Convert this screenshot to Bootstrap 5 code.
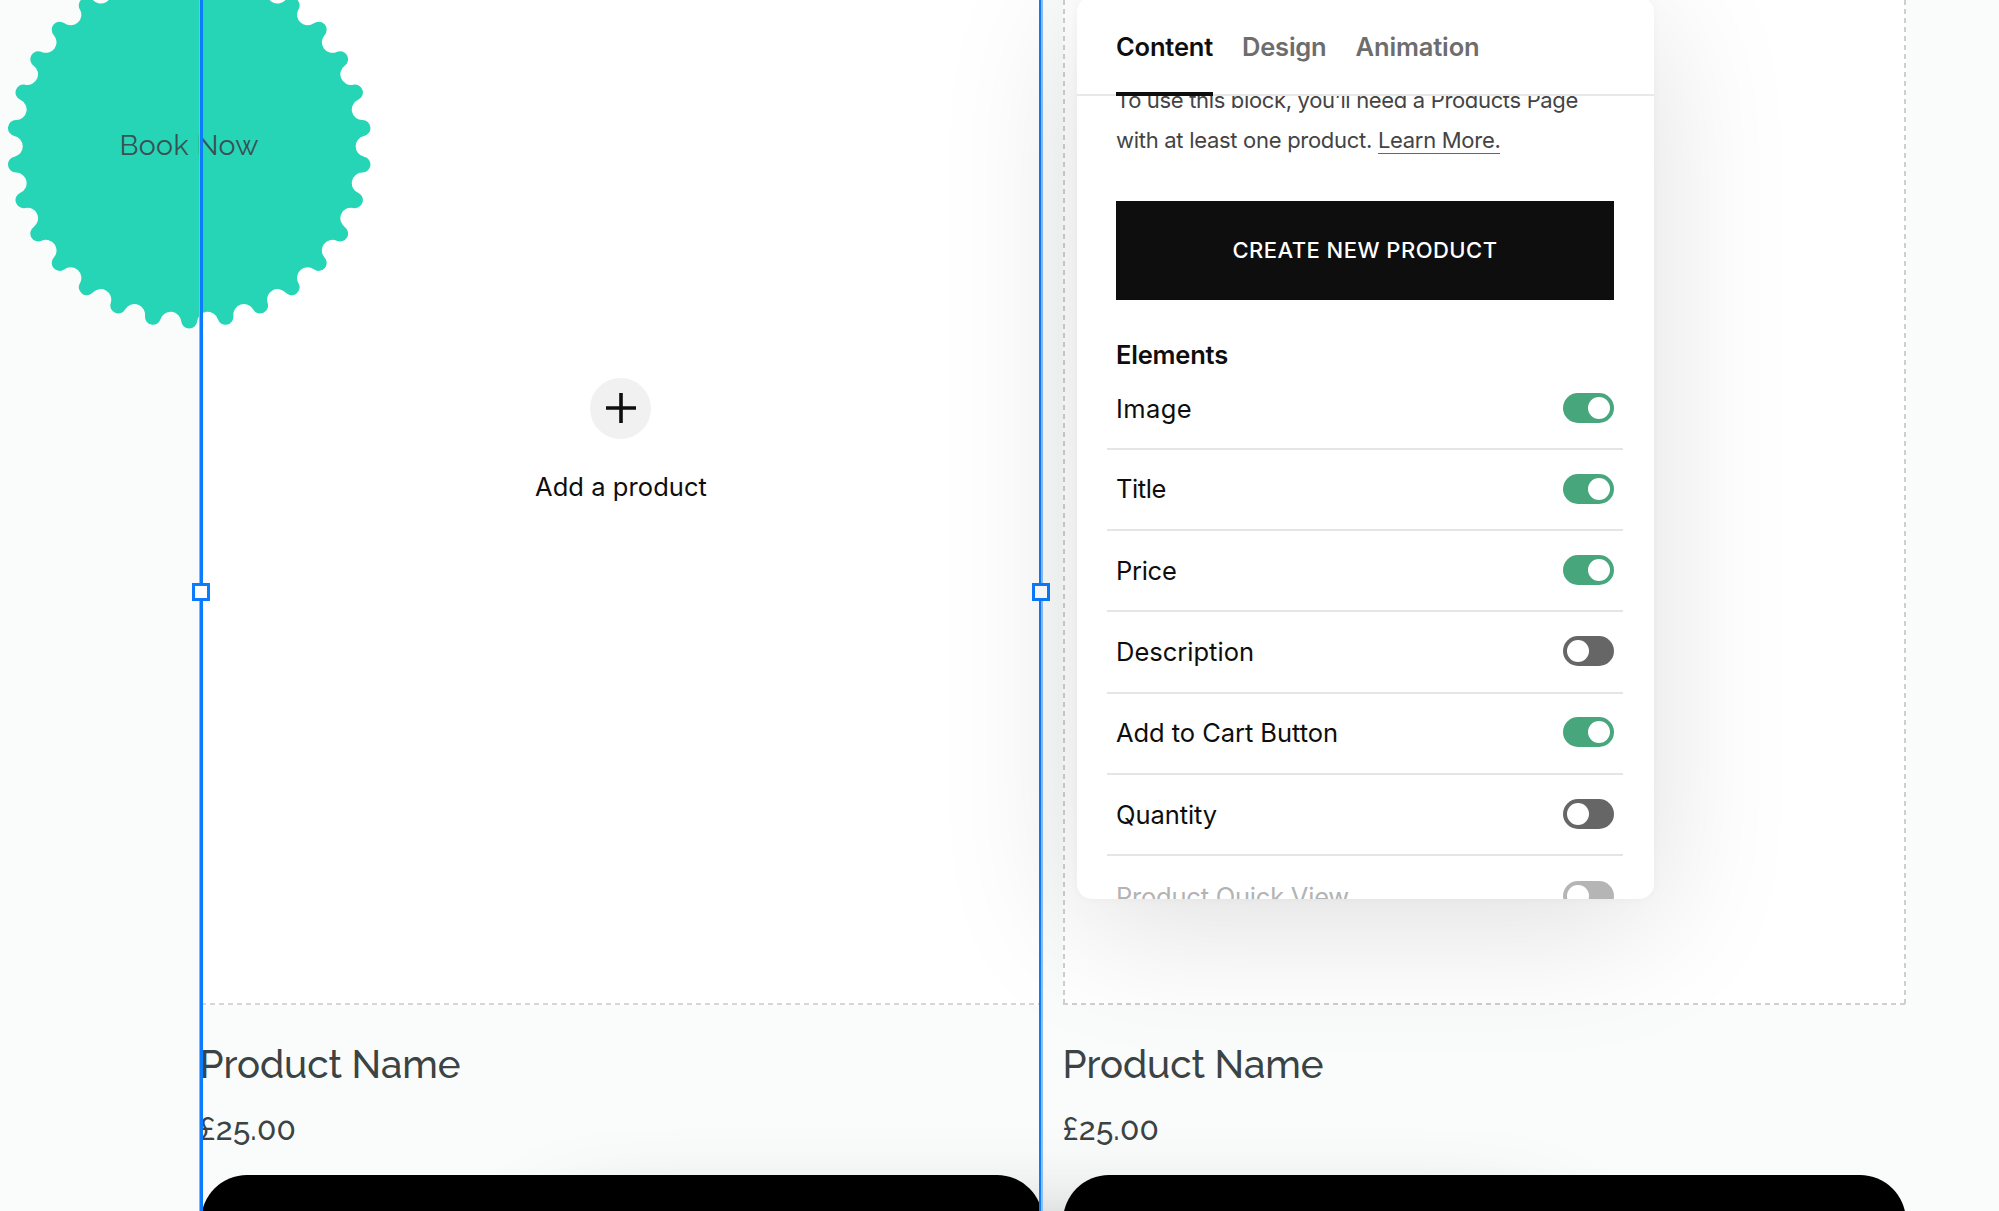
<!DOCTYPE html>
<html lang="en">
<head>
<meta charset="utf-8">
<meta name="viewport" content="width=device-width, initial-scale=1">
<title>Product block editor</title>
<link rel="stylesheet" href="https://cdn.jsdelivr.net/npm/bootstrap@5.3.0/dist/css/bootstrap.min.css">
<style>
  body { background: #fafcfb; font-family: Inter, "Liberation Sans", sans-serif; color: #0e0e0e; height: 1211px; }
  .stage { height: 1211px; padding-left: 200.5px; padding-right: 93px; }
  .products { gap: 20px; }
  .slot { height: 1005px; background: #fff; position: relative; }
  .slot svg.dashes { position: absolute; inset: 0; width: 100%; height: 100%; }
  .product-name, .product-price, .seal text { font-family: Raleway, Lato, sans-serif; color: #3b4344; }
  .product-name { font-size: 38.5px; line-height: 46px; margin: 37px 0 0; font-weight: 500; white-space: nowrap; }
  .product-price { font-size: 31.5px; line-height: 38px; margin: 22px 0 0; font-weight: 500; white-space: nowrap; }
  .first .product-name, .first .product-price { margin-left: -1px; }
  .cta { height: 100px; margin-top: 26.5px; background: #000; border-radius: 46px; position: relative; z-index: 2; }
  .plus-disc { width: 61px; height: 61px; margin: 377.5px 1.5px 0 0; background: #f1f1f1; }
  .add-label { font-size: 25.5px; line-height: 30px; margin: 33.5px 1px 0 0; }
  .seal { position: absolute; left: 0; top: 0; z-index: 3; }
  .edge { position: absolute; top: 0; bottom: 0; width: 4px; z-index: 4; }
  .edge-start { left: 199px; background: linear-gradient(90deg, #8fb0f2 0 1.5px, #0c7cff 1.5px); }
  .edge-end { left: 1039px; background: linear-gradient(90deg, #0c7cff 0 2.5px, #8fbcfb 2.5px); }
  .handle { position: absolute; left: -7px; top: 583px; width: 18px; height: 18px; border: 3.5px solid #0c7cff; background: #fff; }
  .glow { position: absolute; z-index: 1; left: 570px; top: 1250px; width: 960px; height: 200px; box-shadow: 0 0 110px rgba(0,0,0,.42); }
  .editor { position: absolute; z-index: 5; left: 1077px; top: -3px; width: 577px; height: 902px; background: #fff; border-radius: 15px; box-shadow: 0 26px 140px rgba(0,0,0,.13), 0 0 10px rgba(0,0,0,.03); overflow: hidden; }
  .editor-tabs { height: 99px; padding-left: 39px; gap: 29px; border-bottom: 2px solid #e8e8e8; background: #fff; position: relative; z-index: 1; font-size: 25.5px; font-weight: 600; color: #6d6d6d; }
  .tab-item { height: 99px; line-height: 99px; padding: 0; white-space: nowrap; }
  .tab-item.active { color: #0e0e0e; border-bottom: 4px solid #0e0e0e; }
  .editor-body { padding: 0 40px 0 39px; }
  .hint { font-size: 22px; line-height: 40px; color: #444; margin: -16px 0 0; white-space: nowrap; }
  .hint a { color: inherit; text-decoration: none; border-bottom: 1.6px solid #666; }
  .create { margin-top: 40.5px; height: 99.5px; background: #0e0e0e; color: #fff; font-size: 22px; font-weight: 500; border-radius: 0; border: 0; padding-bottom: 6px; }
  .section-title { font-size: 25.5px; line-height: 30px; font-weight: 600; margin: 39.5px 0 0; }
  .options { margin: 0 -9px; }
  .option { height: 81.3px; padding: 0 9px; border-bottom: 2px solid #e5e5e5; font-size: 25.5px; }
  .option:first-child { height: 80.4px; }
  .option.dimmed { color: #b3b3b3; border: 0; }
  .option.dimmed .toggle { background: #b5b5b5; }
  .toggle { width: 51px; height: 30px; border-radius: 15px; background: #666; padding: 4px; margin-bottom: 2px; }
  .toggle i { width: 22px; height: 22px; border-radius: 50%; background: #fff; display: block; }
  .toggle.on { background: #47a67c; justify-content: flex-end; }
</style>
</head>
<body>
<main class="stage position-relative overflow-hidden">
  <div class="products d-flex">
    <section class="first" style="width:842px">
      <div class="slot d-flex flex-column align-items-center">
        <svg class="dashes"><path d="M0 1004H842" stroke="#d5d6d6" stroke-width="2" stroke-dasharray="5 4"/></svg>
        <div class="plus-disc rounded-circle d-flex align-items-center justify-content-center">
          <svg width="30" height="30" viewBox="0 0 30 30" stroke="#0e0e0e" stroke-width="3.6"><path d="M0 15H30M15 0V30"/></svg>
        </div>
        <div class="add-label"><span data-fit="172">Add a product</span></div>
      </div>
      <h2 class="product-name"><span data-fit="261">Product Name</span></h2>
      <p class="product-price"><span data-fit="96.5">£25.00</span></p>
      <div class="cta"></div>
    </section>
    <section style="width:843px">
      <div class="slot">
        <svg class="dashes"><path d="M0 1004H843M1 1004V0M842 1004V0" stroke="#cfcfcf" stroke-width="2" stroke-dasharray="5 4" fill="none"/></svg>
      </div>
      <h2 class="product-name"><span data-fit="261">Product Name</span></h2>
      <p class="product-price"><span data-fit="96.5">£25.00</span></p>
      <div class="cta"></div>
    </section>
  </div>

  <div class="glow"></div>

  <svg class="seal" width="380" height="340" viewBox="0 0 380 340">
    <path id="sealShape" fill="#26d5b5"/>
    <text x="119.5" y="155" font-size="28.5" fill="#3a5052" textLength="139" lengthAdjust="spacing">Book Now</text>
  </svg>

  <div class="edge edge-start"><div class="handle"></div></div>
  <div class="edge edge-end"><div class="handle"></div></div>

  <aside class="editor">
    <nav class="editor-tabs d-flex">
      <div class="tab-item active"><span data-fit="97">Content</span></div>
      <div class="tab-item"><span data-fit="84.5">Design</span></div>
      <div class="tab-item"><span data-fit="124">Animation</span></div>
    </nav>
    <div class="editor-body">
      <p class="hint"><span data-fit="462">To use this block, you’ll need a Products Page</span><br><span data-fit="384.5">with at least one product. <a href="#">Learn More.</a></span></p>
      <button class="create btn w-100 d-flex align-items-center justify-content-center"><span data-fit="265">CREATE NEW PRODUCT</span></button>
      <h3 class="section-title"><span data-fit="112">Elements</span></h3>
      <div class="options">
        <div class="option d-flex align-items-center justify-content-between"><span data-fit="76">Image</span><div class="toggle on d-flex"><i></i></div></div>
        <div class="option d-flex align-items-center justify-content-between"><span data-fit="50">Title</span><div class="toggle on d-flex"><i></i></div></div>
        <div class="option d-flex align-items-center justify-content-between"><span data-fit="60.5">Price</span><div class="toggle on d-flex"><i></i></div></div>
        <div class="option d-flex align-items-center justify-content-between"><span data-fit="138">Description</span><div class="toggle d-flex"><i></i></div></div>
        <div class="option d-flex align-items-center justify-content-between"><span data-fit="222">Add to Cart Button</span><div class="toggle on d-flex"><i></i></div></div>
        <div class="option d-flex align-items-center justify-content-between"><span data-fit="101">Quantity</span><div class="toggle d-flex"><i></i></div></div>
        <div class="option dimmed d-flex align-items-center justify-content-between"><span data-fit="233">Product Quick View</span><div class="toggle d-flex"><i></i></div></div>
      </div>
    </div>
  </aside>
</main>
<script src="https://cdn.jsdelivr.net/npm/bootstrap@5.3.0/dist/js/bootstrap.bundle.min.js"></script>
<script>
  // Scalloped seal: 30 rounded teeth joined by round notches.
  (function () {
    var cx = 189.2, cy = 146.3, n = 30, tipR = 174, notchR = 177.2, tip = 8, notch = 10.6, d = '';
    function at(r, deg) { var a = deg * Math.PI / 180; return [cx + r * Math.cos(a), cy + r * Math.sin(a)]; }
    function mix(a, b) { var t = tip / (tip + notch); return (a[0] + (b[0] - a[0]) * t).toFixed(2) + ' ' + (a[1] + (b[1] - a[1]) * t).toFixed(2); }
    for (var i = 0; i < n; i++) {
      var c = 90 + i * 12, p = at(tipR, c);
      d += (i ? 'A' + notch + ' ' + notch + ' 0 0 0 ' : 'M') + mix(p, at(notchR, c - 6));
      d += 'A' + tip + ' ' + tip + ' 0 0 1 ' + mix(p, at(notchR, c + 6));
    }
    d += 'A' + notch + ' ' + notch + ' 0 0 0 ' + mix(at(tipR, 90), at(notchR, 84)) + 'Z';
    document.getElementById('sealShape').setAttribute('d', d);
  })();
  // Track each label so that it fills its intended width.
  document.querySelectorAll('[data-fit]').forEach(function (el) {
    var base = parseFloat(getComputedStyle(el).letterSpacing) || 0;
    var extra = (el.dataset.fit - el.getBoundingClientRect().width) / el.textContent.length;
    el.style.letterSpacing = (base + extra) + 'px';
  });
</script>
</body>
</html>
